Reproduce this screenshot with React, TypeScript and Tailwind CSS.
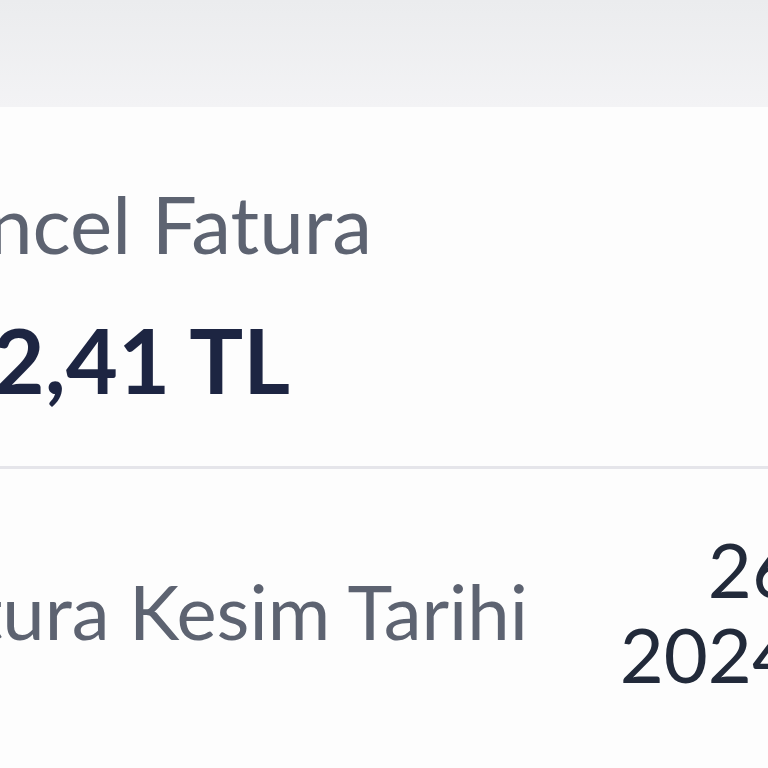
export default function App() {
  return (
    <div className="w-[768px] h-[768px] overflow-hidden bg-white font-['Lato',sans-serif]">
      {/* top bar */}
      <div className="h-[107px] bg-gradient-to-b from-[#ebecee] to-[#f3f3f5]" />

      <div className="bg-[#fdfdfd]">
        {/* current bill */}
        <div className="pt-[68px] pb-[57px]">
          <div className="w-[372px] flex justify-end whitespace-nowrap">
            <span className="text-[80px] leading-[96px] text-[#5d6371]">Güncel Fatura</span>
          </div>
          <div className="w-[290px] flex justify-end whitespace-nowrap mt-[38px]">
            <span className="text-[90px] leading-[100px] font-bold text-[#1d2542]">342,41 TL</span>
          </div>
        </div>

        <div className="h-[3px] bg-[#e5e5ea]" />

        {/* cut-off date */}
        <div className="flex items-start justify-between h-[300px]">
          <div className="w-[528px] pt-[97px] flex justify-end whitespace-nowrap shrink-0">
            <span className="text-[76px] leading-[90px] text-[#5d6371]">Fatura Kesim Tarihi</span>
          </div>
          <div className="flex flex-col items-end pt-[57px] mr-[-28px] text-[76px] leading-[85px] text-[#222a3a] whitespace-nowrap">
            <span>26</span>
            <span>2024</span>
          </div>
        </div>
      </div>
    </div>
  );
}
